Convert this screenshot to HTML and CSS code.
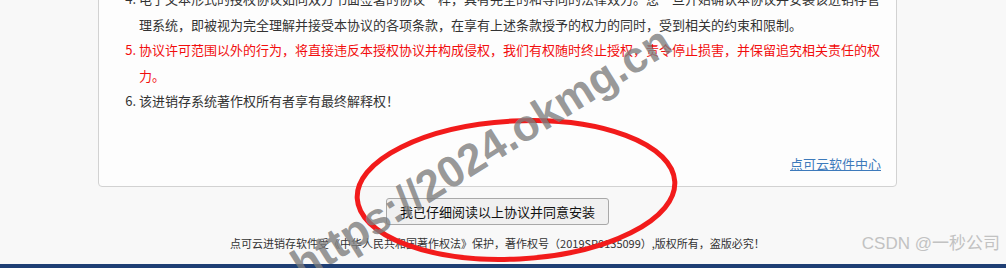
FILE: index.html
```html
<!DOCTYPE html>
<html lang="zh-CN">
<head>
<meta charset="utf-8">
<title>安装协议</title>
<link rel="stylesheet" href="styles.css">
</head>
<body>
<div class="page">
  <div class="card">
    <ol class="terms" start="4">
      <li>电子文本形式的授权协议如同双方书面签署的协议一样，具有完全的和等同的法律效力。您一旦开始确认本协议并安装该进销存管理系统，即被视为完全理解并接受本协议的各项条款，在享有上述条款授予的权力的同时，受到相关的约束和限制。</li>
      <li class="warn">协议许可范围以外的行为，将直接违反本授权协议并构成侵权，我们有权随时终止授权，责令停止损害，并保留追究相关责任的权力。</li>
      <li>该进销存系统著作权所有者享有最终解释权！</li>
    </ol>
    <div class="link-row"><a class="site-link" href="#">点可云软件中心</a></div>
  </div>
  <div class="actions"><button class="agree" type="button">我已仔细阅读以上协议并同意安装</button></div>
  <p class="copyright">点可云进销存软件受《中华人民共和国著作权法》保护，著作权号（2019SR0135099）,版权所有，盗版必究！</p>
  <div class="bottom-bar"></div>

  <svg class="mark-ellipse" width="1006" height="268" viewBox="0 0 1006 268">
    <ellipse cx="516" cy="190" rx="159" ry="69" fill="none" stroke="#f21b1b" stroke-width="5" transform="rotate(-3 516 190)"/>
  </svg>
  <div class="watermark">https://2024.okmg.cn</div>
  <div class="csdn">CSDN @一秒公司</div>
</div>
</body>
</html>
```
FILE: styles.css
```css
* { box-sizing: border-box; }
html, body {
  margin: 0;
  padding: 0;
  height: 268px;
  overflow: hidden;
  background: #f8f8f8;
}
.page {
  position: relative;
  width: 1006px;
  height: 268px;
  overflow: hidden;
  font-family: "Noto Sans CJK SC", "Liberation Sans", sans-serif;
  color: #333;
}
.card {
  width: 799px;
  margin: -25px 0 0 98px;
  padding: 10px 15px 12px 15px;
  background: #fdfdfd;
  border: 1px solid #d2d2d2;
  border-radius: 0 0 4px 4px;
}
.terms {
  margin: 0;
  padding-left: 25px;
  font-size: 13px;
  line-height: 25.6px;
}
.terms li { margin: 0; }
.terms .warn { color: #f20d0d; }
.link-row {
  margin-top: 40px;
  text-align: right;
  line-height: 20px;
  font-size: 13px;
}
.site-link {
  color: #3d7abb;
  text-decoration: underline;
}
.actions {
  display: flex;
  justify-content: center;
  width: 1006px;
  padding-right: 11px;
  margin-top: 11px;
}
.agree {
  width: 223px;
  height: 27px;
  margin: 0;
  padding: 0;
  background: #f0f0f0;
  border: 1px solid #a8a8a8;
  border-radius: 3px;
  font-family: "Noto Sans CJK SC", sans-serif;
  font-size: 13px;
  color: #111;
}
.copyright {
  margin: 10px 0 0 0;
  padding-right: 11px;
  text-align: center;
  font-size: 11px;
  line-height: 16px;
  color: #333;
}
.bottom-bar {
  margin-top: 13px;
  height: 8px;
  background: #1f3f74;
}
.mark-ellipse {
  position: absolute;
  left: 0;
  top: 0;
}
.watermark {
  position: absolute;
  left: 256px;
  top: 128px;
  width: 450px;
  line-height: 50px;
  text-align: center;
  font-family: "Liberation Sans", Arial, sans-serif;
  font-weight: bold;
  font-size: 44px;
  color: rgba(125, 125, 125, 0.8);
  transform: rotate(-32deg);
  white-space: nowrap;
}
.csdn {
  position: absolute;
  right: 6px;
  top: 233px;
  font-family: "Liberation Sans", "Noto Sans CJK SC", sans-serif;
  font-size: 17px;
  line-height: 22px;
  color: #c2c2c2;
}
```
